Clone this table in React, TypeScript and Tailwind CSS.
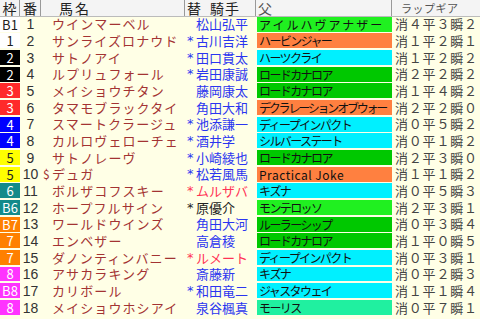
const FRAME: Record<string, string> = {
  '1': 'bg-white text-[#222]',
  '2': 'bg-black text-white',
  '3': 'bg-[#ff2a2a] text-white',
  '4': 'bg-[#0000ff] text-white',
  '5': 'bg-[#ffff00] text-[#222]',
  '6': 'bg-[#138a8a] text-white',
  '7': 'bg-[#ff8000] text-white',
  '8': 'bg-[#ff33ff] text-white',
};

const SIRE: Record<string, string> = {
  lime: 'bg-[#20f020]',
  green: 'bg-[#00c800]',
  orange: 'bg-[#ff8040]',
  cyan: 'bg-[#00f0ff]',
  mint: 'bg-[#20f0a0]',
};

type Row = {
  f: string;
  fl: string;
  no: number;
  name: string;
  pre?: string;
  star: boolean;
  jockey: string;
  jc: string;
  sire: string;
  sc: string;
  st?: string;
  lap: string;
};

const ROWS: Row[] = [
  { f: '1', fl: 'B1', no: 1, name: 'ウインマーベル', star: false, jockey: '松山弘平', jc: 'text-[#2b35f0]', sire: 'アイルハヴアナザー', sc: 'lime', st: 'tracking-[2px]', lap: '消４平３瞬２' },
  { f: '1', fl: '1', no: 2, name: 'サンライズロナウド', star: true, jockey: '古川吉洋', jc: 'text-[#2b35f0]', sire: 'ハービンジャー', sc: 'orange', lap: '消１平２瞬１' },
  { f: '2', fl: '2', no: 3, name: 'サトノアイ', star: true, jockey: '田口貫太', jc: 'text-[#2b35f0]', sire: 'ハーツクライ', sc: 'cyan', lap: '消１平２瞬２' },
  { f: '2', fl: '2', no: 4, name: 'ルプリュフォール', star: true, jockey: '岩田康誠', jc: 'text-[#2b35f0]', sire: 'ロードカナロア', sc: 'green', lap: '消２平２瞬２' },
  { f: '3', fl: '3', no: 5, name: 'メイショウチタン', star: false, jockey: '藤岡康太', jc: 'text-[#2b35f0]', sire: 'ロードカナロア', sc: 'green', lap: '消１平４瞬２' },
  { f: '3', fl: '3', no: 6, name: 'タマモブラックタイ', star: false, jockey: '角田大和', jc: 'text-[#2b35f0]', sire: 'デクラレーションオブウォー', sc: 'orange', st: 'tracking-[-2.2px]', lap: '消２平２瞬０' },
  { f: '4', fl: '4', no: 7, name: 'スマートクラージュ', star: true, jockey: '池添謙一', jc: 'text-[#2b35f0]', sire: 'ディープインパクト', sc: 'cyan', lap: '消０平５瞬２' },
  { f: '4', fl: '4', no: 8, name: 'カルロヴェローチェ', star: true, jockey: '酒井学', jc: 'text-[#2b35f0]', sire: 'シルバーステート', sc: 'cyan', lap: '消０平１瞬２' },
  { f: '5', fl: '5', no: 9, name: 'サトノレーヴ', star: true, jockey: '小崎綾也', jc: 'text-[#2b35f0]', sire: 'ロードカナロア', sc: 'green', lap: '消２平３瞬０' },
  { f: '5', fl: '5', no: 10, name: 'デュガ', pre: '$', star: true, jockey: '松若風馬', jc: 'text-[#2b35f0]', sire: 'Practical Joke', sc: 'orange', st: 'tracking-[0.5px]', lap: '消１平１瞬２' },
  { f: '6', fl: '6', no: 11, name: 'ボルザコフスキー', star: true, jockey: 'ムルザバ', jc: 'text-[#ff3355]', sire: 'キズナ', sc: 'cyan', lap: '消０平５瞬３' },
  { f: '6', fl: 'B6', no: 12, name: 'ホープフルサイン', star: true, jockey: '原優介', jc: 'text-[#222]', sire: 'モンテロッソ', sc: 'lime', lap: '消２平３瞬１' },
  { f: '7', fl: 'B7', no: 13, name: 'ワールドウインズ', star: false, jockey: '角田大河', jc: 'text-[#2b35f0]', sire: 'ルーラーシップ', sc: 'green', lap: '消０平３瞬４' },
  { f: '7', fl: '7', no: 14, name: 'エンベザー', star: false, jockey: '高倉稜', jc: 'text-[#2b35f0]', sire: 'ロードカナロア', sc: 'green', lap: '消１平０瞬５' },
  { f: '7', fl: '7', no: 15, name: 'ダノンティンバニー', star: true, jockey: 'ルメート', jc: 'text-[#ff3355]', sire: 'ディープインパクト', sc: 'cyan', lap: '消０平３瞬１' },
  { f: '8', fl: '8', no: 16, name: 'アサカラキング', star: false, jockey: '斎藤新', jc: 'text-[#2b35f0]', sire: 'キズナ', sc: 'cyan', lap: '消０平２瞬３' },
  { f: '8', fl: 'B8', no: 17, name: 'カリボール', star: true, jockey: '和田竜二', jc: 'text-[#2b35f0]', sire: 'ジャスタウェイ', sc: 'cyan', lap: '消１平１瞬４' },
  { f: '8', fl: '8', no: 18, name: 'メイショウホシアイ', star: false, jockey: '泉谷楓真', jc: 'text-[#2b35f0]', sire: 'モーリス', sc: 'mint', lap: '消０平７瞬１' },
];

const font = { fontFamily: '"Noto Sans CJK JP", "Liberation Sans", sans-serif' };
const star = { fontFamily: '"DejaVu Sans", sans-serif' };

export default function App() {
  return (
    <div className="w-[480px] h-[319px] overflow-hidden bg-[#ffffe6] text-[13px] leading-[14px]" style={font}>
      {/* header */}
      <div className="flex h-[16.67px] bg-[#f4f4f4] border-b border-[#bbb] text-[#222] text-[14px] leading-[14px]">
        <div className="w-[20px] border-r border-[#999] flex items-center justify-center">枠</div>
        <div className="w-[21px] border-r border-[#999] flex items-center justify-center">番</div>
        <div className="w-[144px] border-r border-[#999] flex items-center pl-[18px] tracking-[2px]">馬名</div>
        <div className="w-[71px] border-r border-[#999] flex items-center pl-[2px]">
          <span>替</span>
          <span className="ml-[9px] tracking-[1px]">騎手</span>
        </div>
        <div className="w-[136px] border-r border-[#999] flex items-center pl-[2px] text-[#555]">父</div>
        <div className="flex-1 flex items-center pl-[9px] text-[11px] text-[#555] tracking-[0.5px]">ラップギア</div>
      </div>

      {ROWS.map((r) => (
        <div key={r.no} className="flex h-[16.67px]">
          <div className="w-[20px] pb-[1.7px]">
            <div className={`h-full flex items-center justify-center text-[13px] leading-[13px] ${FRAME[r.f]}`}>{r.fl}</div>
          </div>
          <div className="w-[21px] flex items-center justify-center text-[14px] text-[#333] pb-[1px]" style={{ fontFamily: '"Liberation Sans Narrow", "Liberation Sans", sans-serif' }}>
            {r.no}
          </div>
          <div className="w-[144px] flex items-center pl-[2px] text-[#a33333] pb-[1px]">
            <span className="w-[9px] text-[12px]">{r.pre ?? ''}</span>
            <span className="tracking-[1.1px]">{r.name}</span>
          </div>
          <div className={`w-[71px] flex items-center pl-[2px] pb-[1px] ${r.jc}`}>
            <span className="w-[9px] text-[13px]" style={star}>{r.star ? '*' : ''}</span>
            <span>{r.jockey}</span>
          </div>
          <div className="w-[136px] pl-[1px] pb-[1.7px]">
            <div className={`h-full flex items-center pl-[2px] text-[12px] leading-[13px] text-[#111] tracking-[-1.6px] whitespace-nowrap overflow-hidden ${SIRE[r.sc]}`}>
              <span className={r.st ?? ''}>{r.sire}</span>
            </div>
          </div>
          <div className="flex-1 flex items-center pl-[3px] text-[#444] tracking-[0.8px] pb-[1px]">{r.lap}</div>
        </div>
      ))}
    </div>
  );
}
